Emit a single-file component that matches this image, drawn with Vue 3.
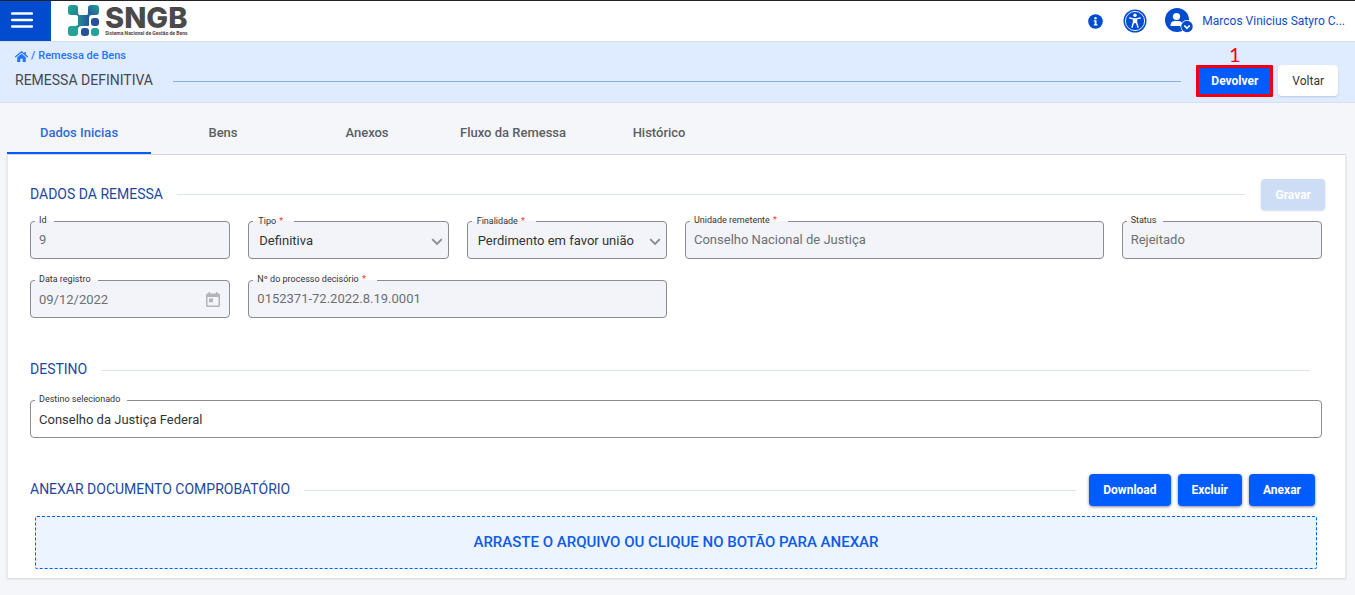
<script setup>
import { ref } from 'vue'

const tabs = ['Dados Inicias', 'Bens', 'Anexos', 'Fluxo da Remessa', 'Histórico']
const active = ref('Dados Inicias')
const fields = [
  { id: 'id', label: 'Id', value: '9' },
  { id: 'tipo', label: 'Tipo', value: 'Definitiva', required: true, kind: 'select' },
  { id: 'finalidade', label: 'Finalidade', value: 'Perdimento em favor união', required: true, kind: 'select' },
  { id: 'unidade', label: 'Unidade remetente', value: 'Conselho Nacional de Justiça', required: true, wide: true },
  { id: 'status', label: 'Status', value: 'Rejeitado' },
  { id: 'data', label: 'Data registro', value: '09/12/2022', kind: 'date' },
  { id: 'processo', label: 'Nº do processo decisório', value: '0152371-72.2022.8.19.0001', required: true, wide: true }
]
const destino = ref('Conselho da Justiça Federal')
</script>

<template>
  <div class="page">
    <header class="topbar">
      <button class="menu" type="button" aria-label="Menu">
        <svg width="22" height="16" viewBox="0 0 22 16"><path d="M1 1.5h20M1 8h20M1 14.5h20" stroke="#fff" stroke-width="2.4" stroke-linecap="round" /></svg>
      </button>
      <a class="logo" href="#">
        <svg width="31" height="32" viewBox="0 0 31 32">
          <defs>
            <linearGradient id="g1" x1="0" y1="0" x2="1" y2="1"><stop offset="0" stop-color="#23a79a" /><stop offset="1" stop-color="#267f91" /></linearGradient>
            <linearGradient id="g2" x1="0" y1="0" x2="1" y2="0"><stop offset="0" stop-color="#258c96" /><stop offset="1" stop-color="#25569a" /></linearGradient>
            <linearGradient id="g3" x1="0" y1="1" x2="1" y2="0"><stop offset="0" stop-color="#27509a" /><stop offset="1" stop-color="#23a296" /></linearGradient>
          </defs>
          <path d="M10 7Q10 11 14 11L11 14Q11 10 7 10zM20 7Q20 11 17 11L21 14Q21 10 24 10zM11 17Q11 21 7 21L10 24Q10 21 14 21z" fill="#267f91" />
          <rect x="0" y="0" width="10" height="10" rx="3" fill="url(#g1)" />
          <rect x="20" y="0" width="11" height="10" rx="3" fill="url(#g3)" />
          <rect x="10" y="10" width="11" height="11" rx="1" fill="url(#g2)" />
          <rect x="23" y="13" width="8" height="8" rx="3" fill="#27509a" />
          <rect x="0" y="21" width="10" height="10" rx="3" fill="#23a296" />
          <rect x="13" y="23" width="8" height="8" rx="3" fill="#27509a" />
          <rect x="23" y="23" width="8" height="8" rx="3" fill="#23a296" />
        </svg>
        <span class="brand"><strong>SNGB</strong><small>Sistema Nacional de Gestão de Bens</small></span>
      </a>
      <div class="tools">
        <button type="button" class="tool" aria-label="Informações">
          <svg width="15" height="15" viewBox="0 0 15 15"><circle cx="7.5" cy="7.5" r="7.3" fill="#004bce" /><circle cx="7.5" cy="4.2" r="1.2" fill="#fff" /><path d="M5.8 6.2h2.7v4h1v1.4H5.8v-1.4h.9V7.6h-.9z" fill="#fff" /></svg>
        </button>
        <button type="button" class="tool" aria-label="Acessibilidade">
          <svg width="24" height="24" viewBox="0 0 24 24"><circle cx="12" cy="12" r="11.5" fill="#004bce" /><circle cx="12" cy="12" r="9.6" fill="none" stroke="#fff" stroke-width=".9" /><circle cx="12" cy="6.3" r="1.7" fill="#fff" /><path d="M6.800 9l3.700.9h3l3.700-.9M10.500 9.900v3.600L9 18.200M13.500 9.900v3.600l1.500 4.700" fill="none" stroke="#fff" stroke-width="1.400" stroke-linecap="round" stroke-linejoin="round" /><path d="M10.500 9.900h3v4.300h-3z" fill="#fff" /></svg>
        </button>
        <button type="button" class="user">
          <svg width="28" height="26" viewBox="0 0 28 26"><circle cx="12" cy="12" r="12" fill="#004bce" /><circle cx="11.5" cy="8.5" r="3.6" fill="#fff" /><path d="M5.5 18v-1.2c0-2.3 2-3.8 4-3.8h4c2 0 4 1.500 4 3.800V18z" fill="#fff" /><circle cx="22" cy="18.500" r="6.500" fill="#fff" /><circle cx="22" cy="18.500" r="5.700" fill="#004bce" /><path d="M19.200 17.500l2.800 2.700 2.800-2.700" fill="none" stroke="#fff" stroke-width="1.700" /></svg>
          <span>Marcos Vinicius Satyro C...</span>
        </button>
      </div>
    </header>

    <section class="band">
      <nav class="crumbs">
        <a href="#" aria-label="Início"><svg width="13" height="11" viewBox="0 0 13 11"><path d="M.6 5.700L6.500.8l5.900 4.900" fill="none" stroke="#2476ff" stroke-width="1.300" stroke-linecap="round" /><path d="M2.200 6.200L6.500 2.700l4.300 3.500V11H7.700V7.800H5.300V11H2.200zM9.400 1h1.500v3l-1.500-1z" fill="#2476ff" /></svg></a>
        <span>/</span>
        <a href="#">Remessa de Bens</a>
      </nav>
      <div class="title-row">
        <h1>REMESSA DEFINITIVA</h1>
        <span class="rule strong"></span>
        <div class="actions">
          <span class="marked"><span class="step">1</span><button type="button" class="btn highlight">Devolver</button></span>
          <button type="button" class="btn light">Voltar</button>
        </div>
      </div>
    </section>

    <main>
      <nav class="tabs" role="tablist">
        <button v-for="t in tabs" :key="t" type="button" role="tab" :aria-selected="t === active" :class="{ on: t === active }" @click="active = t">{{ t }}</button>
      </nav>
      <div class="card">
        <div class="section-head first">
          <h2>DADOS DA REMESSA</h2>
          <span class="rule"></span>
          <button type="button" class="btn off" disabled>Gravar</button>
        </div>
        <div class="grid">
          <fieldset v-for="f in fields" :key="f.id" class="field" :class="[f.kind, { wide: f.wide }]">
            <legend><label :for="f.id">{{ f.label }}<i v-if="f.required"> *</i></label></legend>
            <template v-if="f.kind === 'select'">
              <select :id="f.id"><option>{{ f.value }}</option></select>
              <svg class="chev" width="12" height="8" viewBox="0 0 12 8"><path d="M1.200 1.200L6 6l4.800-4.800" fill="none" stroke="#8a8c91" stroke-width="1.900" /></svg>
            </template>
            <input v-else :id="f.id" type="text" :value="f.value" readonly />
            <svg v-if="f.kind === 'date'" class="cal" width="14" height="15" viewBox="0 0 14 15"><path fill-rule="evenodd" d="M2.500 0h1.500v1.500h6V0h1.500v1.500H12.500c.8 0 1.500.7 1.500 1.500v10.500c0 .8-.7 1.500-1.500 1.500h-11C.7 15 0 14.300 0 13.500V3c0-.8.7-1.500 1.500-1.500h1zM1.500 5v8.500h11V5zM3 6.500h4v3.800H3z" fill="#b3b4b8" /></svg>
          </fieldset>
        </div>

        <div class="section-head second">
          <h2>DESTINO</h2>
          <span class="rule"></span>
        </div>
        <fieldset class="field open">
          <legend><label for="destino">Destino selecionado</label></legend>
          <input id="destino" v-model="destino" type="text" />
        </fieldset>

        <div class="section-head third">
          <h2>ANEXAR DOCUMENTO COMPROBATÓRIO</h2>
          <span class="rule"></span>
          <div class="buttons">
            <button type="button" class="btn primary">Download</button>
            <button type="button" class="btn primary">Excluir</button>
            <button type="button" class="btn primary">Anexar</button>
          </div>
        </div>
        <button type="button" class="drop">ARRASTE O ARQUIVO OU CLIQUE NO BOTÃO PARA ANEXAR</button>
      </div>
    </main>
  </div>
</template>

<style>
body {
  background: #f5f6fa;
}
</style>

<style scoped>
.page {
  font-family: Roboto, sans-serif;
  font-size: 13px;
  color: #45484d;
  border-top: 1px solid #222126;
  padding-bottom: 16px;
}
.page * {
  box-sizing: border-box;
}
button,
input,
select {
  font: inherit;
}
button {
  border: 0;
  cursor: pointer;
}
a {
  text-decoration: none;
}
.topbar {
  display: flex;
  align-items: center;
  height: 40px;
  background: #fff;
}
.menu {
  width: 51px;
  height: 40px;
  padding: 0 8px 2px 0;
  background: #004bce;
}
.menu svg {
  display: inline-block;
  vertical-align: middle;
}
.logo {
  display: flex;
  gap: 6px;
  margin-left: 17px;
  color: #4a4a4a;
}
.brand {
  display: flex;
  flex-direction: column;
}
.brand strong {
  font: 800 29px/25px Inter, sans-serif;
}
.brand small {
  font: 700 5px/7px Roboto, sans-serif;
}
.tools {
  display: flex;
  align-items: center;
  margin-left: auto;
  padding-right: 10px;
  gap: 20px;
}
.tool,
.user {
  display: flex;
  padding: 0;
  background: none;
}
.user {
  align-items: center;
  gap: 9px;
  margin-left: -2px;
  color: #0d4dc9;
  font-size: 12px;
}
.band {
  height: 62px;
  padding: 7px 17px 0 15px;
  background: #dfebff;
  border-top: 1px solid #d5dfed;
  border-bottom: 1px solid #d5e0f0;
}
.crumbs {
  display: flex;
  align-items: center;
  gap: 3px;
  font-size: 11px;
  font-weight: 500;
  line-height: 14px;
  color: #2476ff;
}
.crumbs a {
  color: #2476ff;
}
.crumbs svg {
  display: block;
}
.title-row {
  display: flex;
  align-items: center;
  margin-top: 2px;
}
h1 {
  margin: 0;
  padding-bottom: 2px;
  font-size: 14px;
  font-weight: 400;
}
.rule {
  flex: 1;
  height: 1px;
  background: #dbe3ec;
}
.section-head .rule {
  margin: 0 16px 0 14px;
}
.title-row .strong {
  margin: 0 15px 0 20px;
  background: #8eaddf;
}
.actions {
  display: flex;
  gap: 5px;
}
.marked {
  position: relative;
}
.step {
  position: absolute;
  left: 0;
  right: 0;
  top: -21px;
  text-align: center;
  font: 20px/20px Lato, sans-serif;
  color: #f00016;
}
.btn {
  height: 31px;
  padding: 0 14px;
  border-radius: 4px;
  font-size: 12px;
}
.highlight {
  height: 32px;
  padding: 0 12px;
  border: 3px solid #f00016;
  border-radius: 1px;
  background: #005cff;
  color: #fff;
  font-weight: 700;
}
.light {
  background: #fff;
  color: #333;
  box-shadow: 0 1px 2px #b9c8df;
}
.off {
  background: #cdddf6;
  color: #fff;
  font-weight: 700;
  box-shadow: 0 1px 2px #d5d9e2;
}
.primary {
  height: 32px;
  background: #005cff;
  color: #fff;
  font-weight: 700;
  box-shadow: 0 1px 3px #7d8694;
}
main {
  margin: 0 9px 0 7px;
}
.tabs {
  display: flex;
  height: 52px;
  border-bottom: 1px solid #d5d7dc;
}
.tabs button {
  min-width: 144px;
  height: 51px;
  padding: 10px 21px 0;
  background: none;
  border-bottom: 2px solid transparent;
  color: #5b5e63;
  font-weight: 500;
}
.tabs .on {
  color: #2d6bd6;
  border-bottom-color: #005cff;
}
.card {
  padding: 24px 23px 9px 22px;
  background: #fff;
  border-right: 1px solid #e8e9ee;
  border-left: 1px solid #e8e9ee;
  box-shadow: 0 1px 2px #cfd0d6;
}
.section-head {
  display: flex;
  align-items: center;
}
h2 {
  margin: 0;
  padding-bottom: 2px;
  font-size: 14px;
  font-weight: 400;
  line-height: 16px;
  color: #1c489f;
}
.first {
  margin-right: -3px;
}
.second {
  margin-top: 43px;
}
.section-head.second .rule {
  margin-right: 12px;
}
.third {
  margin-top: 36px;
  padding-right: 7px;
}
.section-head.third .rule {
  margin-right: 13px;
}
.buttons {
  display: flex;
  gap: 7px;
}
.grid {
  display: grid;
  grid-template-columns: repeat(6, minmax(0, 1fr));
  gap: 15px 18px;
  margin-top: 5px;
}
.field {
  position: relative;
  min-width: 0;
  height: 44px;
  margin: 0;
  padding: 0 8px;
  border: 1px solid #8a8c91;
  border-radius: 4px;
  background: #f3f4f9;
}
.wide {
  grid-column: span 2;
}
.open {
  margin-top: 15px;
  background: #fff;
}
.field legend {
  height: 13px;
  margin-left: -4px;
  padding: 0 7px 0 4px;
  font-size: 9px;
  line-height: 10px;
  color: #333;
}
.select legend {
  padding-left: 5px;
  line-height: 13px;
}
.field i {
  font-style: normal;
  color: #f33;
  margin: 0 4px 0 1px;
}
.field input,
.field select {
  display: block;
  width: 100%;
  height: 26px;
  padding: 0;
  border: 0;
  outline: 0;
  background: none;
  color: #6d6f74;
  appearance: none;
}
.field input {
  padding-bottom: 4px;
}
.field select {
  padding-left: 2px;
  padding-bottom: 2px;
  color: #333;
}
.field.open input {
  padding-bottom: 2px;
  color: #333;
}
.field.date input {
  padding-bottom: 2px;
}
.chev {
  position: absolute;
  right: 5px;
  top: 10px;
  pointer-events: none;
}
.cal {
  position: absolute;
  right: 9px;
  top: 5px;
}
.drop {
  display: block;
  width: calc(100% - 10px);
  height: 53px;
  margin: 10px 5px 0;
  padding-bottom: 2px;
  border: 1px dashed #005cff;
  border-radius: 2px;
  background: #ecf4ff;
  color: #0d5bea;
  font-size: 15px;
  font-weight: 500;
}
</style>
